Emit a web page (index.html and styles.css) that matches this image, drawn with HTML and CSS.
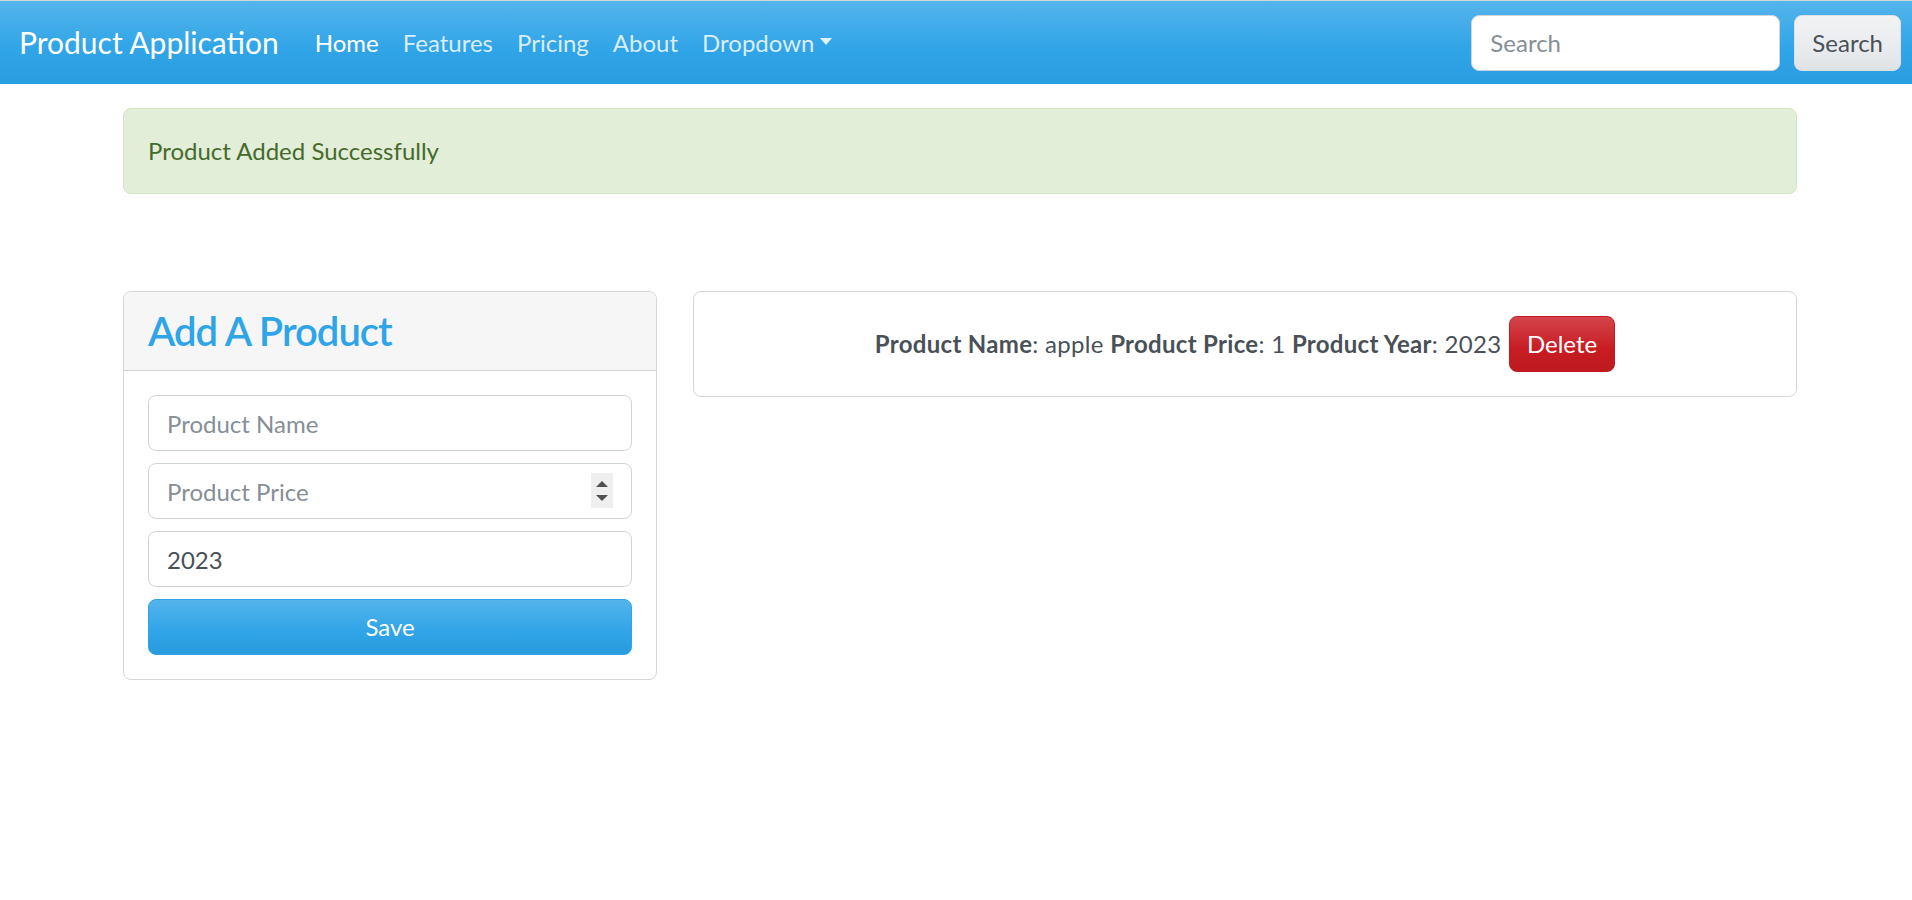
FILE: index.html
```html
<!DOCTYPE html>
<html lang="en">
<head>
<meta charset="utf-8">
<title>Product Application</title>
<link rel="stylesheet" href="styles.css">
</head>
<body>
<nav class="navbar">
  <a class="brand" href="#">Product Application</a>
  <ul class="nav">
    <li><a class="nav-link active" href="#">Home</a></li>
    <li><a class="nav-link" href="#">Features</a></li>
    <li><a class="nav-link" href="#">Pricing</a></li>
    <li><a class="nav-link" href="#">About</a></li>
    <li><a class="nav-link" href="#">Dropdown<span class="caret"></span></a></li>
  </ul>
  <form class="search">
    <input class="search-input" type="text" placeholder="Search">
    <button class="btn btn-secondary" type="button">Search</button>
  </form>
</nav>

<main class="container">
  <div class="alert">Product Added Successfully</div>

  <div class="row">
    <section class="card card-form">
      <div class="card-header"><h3 class="card-title">Add A Product</h3></div>
      <div class="card-body form-body">
        <input class="form-control" type="text" placeholder="Product Name">
        <div class="number-wrap">
          <input class="form-control" type="text" placeholder="Product Price">
          <span class="spinner"><span class="tri-up"></span><span class="tri-down"></span></span>
        </div>
        <input class="form-control" type="text" value="2023">
        <button class="btn btn-primary btn-block" type="button">Save</button>
      </div>
    </section>

    <section class="card card-list">
      <div class="card-body list-body">
        <p class="product-line"><b>Product Name</b>: apple <b>Product Price</b>: 1 <b>Product Year</b>: 2023 <button class="btn btn-danger" type="button">Delete</button></p>
      </div>
    </section>
  </div>
</main>
</body>
</html>
```

FILE: styles.css
```css
* { box-sizing: border-box; }

html, body {
  margin: 0;
  padding: 0;
  background: #fff;
}

body {
  font-family: "Segoe UI", Lato, "Open Sans", sans-serif;
  font-size: 24px;
  line-height: 1.5;
  color: #495057;
}

/* ---------- navbar ---------- */
.navbar {
  height: 84px;
  display: flex;
  align-items: center;
  padding: 0 11px 0 17px;
  border-top: 1px solid #d4d8dc;
  background-image: linear-gradient(#54b4eb, #2fa4e7 60%, #2a9de0);
}

.brand {
  font-size: 30px;
  line-height: 45px;
  color: #fff;
  text-decoration: none;
  margin-right: 22px;
  padding: 0 2px;
}

.nav {
  display: flex;
  list-style: none;
  margin: 0;
  padding: 0;
  flex: 1;
}

.nav-link {
  display: flex;
  align-items: center;
  padding: 12px 12px;
  color: rgba(255, 255, 255, 0.82);
  text-decoration: none;
  font-size: 24px;
  line-height: 36px;
}

.nav-link.active { color: #fff; }

.caret {
  display: inline-block;
  margin-left: 6px;
  width: 0;
  height: 0;
  border-top: 7px solid rgba(255, 255, 255, 0.85);
  border-left: 6px solid transparent;
  border-right: 6px solid transparent;
  margin-top: -2px;
}

.search {
  display: flex;
  align-items: center;
  gap: 14px;
  margin: 0;
}

.search-input {
  width: 309px;
  height: 56px;
  padding: 9px 18px;
  font: inherit;
  font-size: 24px;
  color: #495057;
  background: #fff;
  border: 1px solid #ced4da;
  border-radius: 8px;
  outline: none;
}

.search-input::placeholder { color: #868e96; }

/* ---------- buttons ---------- */
.btn {
  font: inherit;
  font-size: 24px;
  line-height: 36px;
  height: 56px;
  padding: 9px 17px;
  border-radius: 8px;
  border: 1px solid transparent;
  cursor: pointer;
}

.btn-secondary {
  color: #495057;
  background-image: linear-gradient(#f1f2f4, #e9ecef 60%, #dfe2e5);
  border-color: #dde0e3;
}

.btn-primary {
  color: #fff;
  background-image: linear-gradient(#54b4eb, #2fa4e7 60%, #2a9cdd);
  border-color: #2fa4e7;
}

.btn-danger {
  color: #fff;
  background-image: linear-gradient(#d4454b, #c71c22 60%, #bd1a20);
  border-color: #c01b21;
  vertical-align: top;
  margin-left: 1px;
  letter-spacing: 0;
}

.btn-block { width: 100%; display: block; }

/* ---------- layout ---------- */
.container {
  width: 1674px;
  margin: 0 0 0 123px;
}

.alert {
  margin-top: 24px;
  padding: 24px 24px;
  line-height: 36px;
  background: #e2eed7;
  border: 1px solid #d3e6c4;
  border-radius: 8px;
  color: #456a2d;
}

.row {
  display: flex;
  align-items: flex-start;
  gap: 36px;
  margin-top: 97px;
}

.card {
  border: 1px solid #d6d6d6;
  border-radius: 8px;
  background: #fff;
}

.card-form { width: 534px; flex: none; }
.card-list { flex: 1; }

.card-header {
  background: #f6f6f6;
  border-bottom: 1px solid #d2d2d2;
  padding: 12px 24px;
  border-radius: 8px 8px 0 0;
}

.card-title {
  margin: 0;
  font-size: 40px;
  line-height: 54px;
  font-weight: 600;
  letter-spacing: -1px;
  color: #2fa4e7;
}

.card-body { padding: 24px; }

.form-body {
  display: flex;
  flex-direction: column;
  gap: 12px;
}

.form-control {
  display: block;
  width: 100%;
  height: 56px;
  padding: 9px 18px;
  font: inherit;
  font-size: 24px;
  color: #495057;
  background: #fff;
  border: 1px solid #ced4da;
  border-radius: 8px;
  outline: none;
}

.form-control::placeholder { color: #868e96; }

.number-wrap { position: relative; }

.spinner {
  position: absolute;
  right: 19px;
  top: 10px;
  width: 22px;
  height: 35px;
  background: #efefef;
  display: flex;
  flex-direction: column;
  align-items: center;
  justify-content: center;
  gap: 8px;
}

.tri-up, .tri-down {
  width: 0;
  height: 0;
  border-left: 6px solid transparent;
  border-right: 6px solid transparent;
}

.tri-up { border-bottom: 6px solid #505050; }
.tri-down { border-top: 6px solid #505050; }

.list-body {
  display: flex;
  justify-content: center;
}

.product-line {
  margin: 0;
  height: 56px;
  line-height: 56px;
  white-space: nowrap;
  letter-spacing: 0.3px;
}

.product-line b { font-weight: 700; }
```
